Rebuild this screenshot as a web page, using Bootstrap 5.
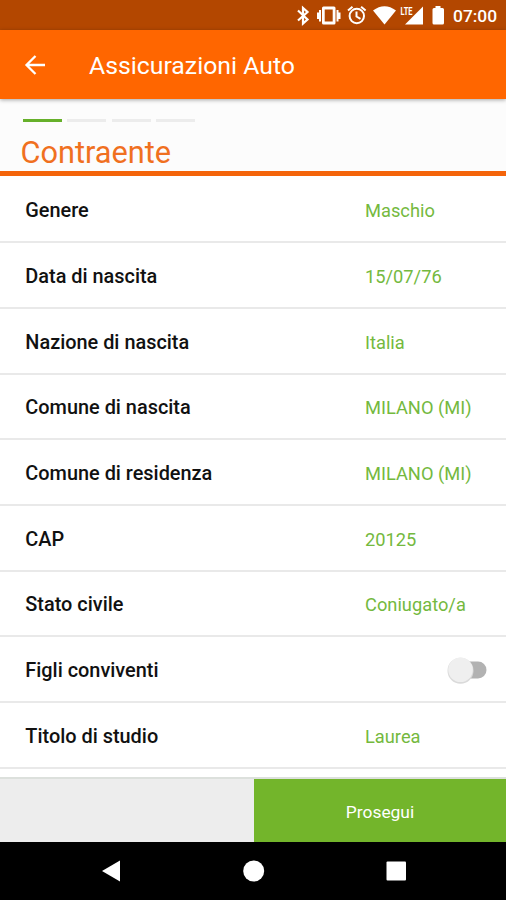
<!DOCTYPE html>
<html lang="it">
<head>
<meta charset="utf-8">
<meta name="viewport" content="width=device-width, initial-scale=1">
<title>Assicurazioni Auto</title>
<link href="https://cdn.jsdelivr.net/npm/bootstrap@5.3.0/dist/css/bootstrap.min.css" rel="stylesheet">
<style>
  body { font-family: Roboto, "Liberation Sans", sans-serif; background: #fff; }
  .screen { width: 506px; height: 900px; }
  .statusbar { height: 30px; background: #b34700; padding-left: 295px; }
  .clock { font-size: 17.4px; font-weight: 500; line-height: 30px; padding-top: 1px; margin-left: 7px; }
  .appbar { height: 69px; background: #f60; padding: 0 0 0 23px; box-shadow: 0 1px 4px rgba(0,0,0,.35); z-index: 1; }
  .appbar h1 { font-size: 24.8px; font-weight: 400; line-height: 30px; margin-left: 42px; padding-top: 3px; }
  .section-head { height: 77px; background: #fcfcfc; border-bottom: 5px solid #f4640a; padding: 20px 0 0 23px; }
  .steps { gap: 5.4px; }
  .step { width: 39px; height: 3px; background: #ececec; }
  .step.done { background: #66b02a; }
  .section-head h2 { font-size: 30.7px; font-weight: 400; line-height: 36px; color: #f0701f; margin: 12.5px 0 0 -2.5px; }
  .fields { height: 601px; padding-top: 1.5px; }
  .field { height: 65.7px; border-bottom: 2px solid #e9e9e9; padding: 4px 19px 0 25.3px; }
  .field-name { width: 339.7px; font-size: 19.9px; line-height: 28px; font-weight: 500; color: #111; }
  .field-value { font-size: 18.3px; line-height: 28px; color: #74b93e; }
  .toggle { width: 40px; height: 30px; margin-top: -3px; }
  .actions { height: 65px; background: #ededed; border-top: 2px solid #dce0dc; }
  .proceed { width: 252px; background: #73b52b; color: #fff; font-size: 17.4px; padding: 3px 0 0; }
  .proceed:hover { background: #69a727; color: #fff; }
  .navkeys { height: 58px; }
</style>
</head>
<body>
<div class="screen d-flex flex-column overflow-hidden">
  <div class="statusbar d-flex flex-shrink-0 text-white">
    <svg width="18" height="30" viewBox="295 0 18 30" fill="none" stroke="#fff" stroke-width="2.2"><path d="M298 10.5l9.500 9-4.500 4V8l4.500 4-9.500 8.500"/></svg>
    <svg width="32" height="30" viewBox="313 0 32 30" fill="#fff"><path fill-rule="evenodd" d="M323.500 6.500h10.500q1.500 0 1.500 1.500v15q0 1.500-1.500 1.500h-10.500q-1.500 0-1.500-1.500V8q0-1.500 1.500-1.500zm1.200 3v12h8V9.500z"/><path d="M319 10h2v11.500h-2zM317 12.500h2V19h-2zM336.500 10h2v11.500h-2zM338.500 12.500h2V19h-2z"/></svg>
    <svg width="25" height="30" viewBox="345 0 25 30" fill="none" stroke="#fff" stroke-width="2"><circle cx="356.800" cy="16" r="7.200"/><path d="M348 10.500l4.500-3.800M365.600 10.500l-4.500-3.800M356.500 11.500v5l4 2.300" stroke-width="2"/></svg>
    <svg width="28" height="30" viewBox="370 0 28 30" fill="#fff"><path d="M373 10.500Q384.500 2 396 10.500L384.500 24.500z"/></svg>
    <svg width="30" height="30" viewBox="398 0 30 30" fill="#fff"><path d="M423 6.500V24.500H405z"/><text x="400.500" y="14.800" font-size="11.500" font-weight="700" textLength="12" lengthAdjust="spacingAndGlyphs" stroke="#b34700" stroke-width="1" paint-order="stroke">LTE</text></svg>
    <svg width="18" height="30" viewBox="428 0 18 30" fill="#fff"><path d="M435.500 6h5v2h2q1.500 0 1.500 1.500v13.500q0 1.500-1.500 1.500h-8.500q-1.500 0-1.500-1.500V9.500Q432.500 8 434 8h1.500z"/></svg>
    <span class="clock">07:00</span>
  </div>

  <header class="appbar d-flex align-items-center flex-shrink-0 position-relative text-white">
    <svg width="24" height="24" viewBox="0 0 24 24" fill="none" stroke="#fff" stroke-width="2.300"><path d="M22 12H4M12.500 3L3.500 12l9 9"/></svg>
    <h1 class="mb-0">Assicurazioni Auto</h1>
  </header>

  <section class="section-head flex-shrink-0">
    <div class="steps d-flex">
      <div class="step done"></div>
      <div class="step"></div>
      <div class="step"></div>
      <div class="step"></div>
    </div>
    <h2>Contraente</h2>
  </section>

  <main class="fields flex-shrink-0 overflow-hidden">
    <div class="field d-flex align-items-center"><span class="field-name">Genere</span><span class="field-value">Maschio</span></div>
    <div class="field d-flex align-items-center"><span class="field-name">Data di nascita</span><span class="field-value">15/07/76</span></div>
    <div class="field d-flex align-items-center"><span class="field-name">Nazione di nascita</span><span class="field-value">Italia</span></div>
    <div class="field d-flex align-items-center"><span class="field-name">Comune di nascita</span><span class="field-value">MILANO (MI)</span></div>
    <div class="field d-flex align-items-center"><span class="field-name">Comune di residenza</span><span class="field-value">MILANO (MI)</span></div>
    <div class="field d-flex align-items-center"><span class="field-name">CAP</span><span class="field-value">20125</span></div>
    <div class="field d-flex align-items-center"><span class="field-name">Stato civile</span><span class="field-value">Coniugato/a</span></div>
    <div class="field d-flex align-items-center"><span class="field-name">Figli conviventi</span>
      <svg class="toggle ms-auto" viewBox="0 0 40 30"><rect x="8" y="6.500" width="31.500" height="17" rx="8.500" fill="#b2b2b2"/><circle cx="13.500" cy="15.800" r="13" fill="#dadada"/><circle cx="13.500" cy="14.800" r="12.300" fill="#efefef"/></svg>
    </div>
    <div class="field d-flex align-items-center"><span class="field-name">Titolo di studio</span><span class="field-value">Laurea</span></div>
  </main>

  <div class="actions d-flex flex-shrink-0">
    <button class="proceed btn rounded-0 border-0 ms-auto">Prosegui</button>
  </div>

  <nav class="navkeys d-flex justify-content-center align-items-center flex-shrink-0 bg-black">
    <svg width="308" height="24" viewBox="99 0 308 24" fill="#fff"><path d="M102 12L120 1.500V22.500z"/><circle cx="253.700" cy="12" r="10.500"/><rect x="386.500" y="2.500" width="19.500" height="19" rx="1"/></svg>
  </nav>
</div>
<script src="https://cdn.jsdelivr.net/npm/bootstrap@5.3.0/dist/js/bootstrap.bundle.min.js"></script>
</body>
</html>
